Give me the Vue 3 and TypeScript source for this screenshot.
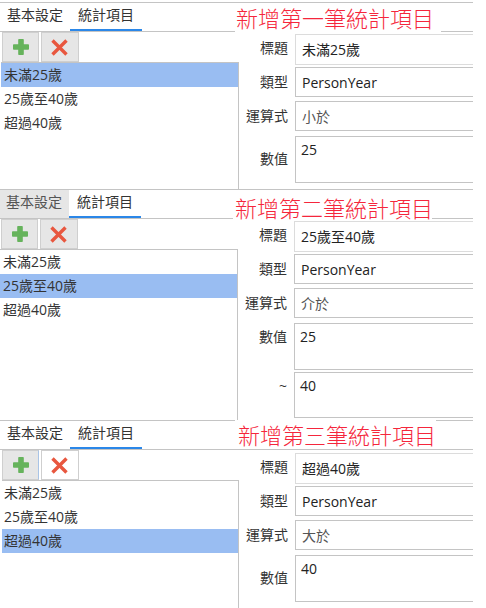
<script setup lang="ts">
interface Panel {
  id: string;
  heading: string;
  title: string;
  operator: string;
  values: string[];
  selected: number;
  firstTabMuted: boolean;
}

const items = ["未滿25歲", "25歲至40歲", "超過40歲"];

const panels: Panel[] = [
  { id: "one", heading: "新增第一筆統計項目", title: "未滿25歲", operator: "小於", values: ["25"], selected: 0, firstTabMuted: false },
  { id: "two", heading: "新增第二筆統計項目", title: "25歲至40歲", operator: "介於", values: ["25", "40"], selected: 1, firstTabMuted: true },
  { id: "three", heading: "新增第三筆統計項目", title: "超過40歲", operator: "大於", values: ["40"], selected: 2, firstTabMuted: false },
];
</script>

<template>
  <div class="page">
    <section v-for="panel in panels" :key="panel.id" class="panel" :class="panel.id">
      <div class="tabs">
        <div class="tab first" :class="{ muted: panel.firstTabMuted }">基本設定</div>
        <div class="tab active">統計項目</div>
      </div>
      <div class="heading">{{ panel.heading }}</div>
      <div class="body">
        <div class="left">
          <div class="toolbar">
            <button class="tool add" type="button">
              <svg width="16" height="16" viewBox="0 0 16 16">
                <path d="M6 0h4a.8.8 0 0 1 .8.8v4.4h4.4a.8.8 0 0 1 .8.8v4a.8.8 0 0 1-.8.8h-4.4v4.4a.8.8 0 0 1-.8.8H6a.8.8 0 0 1-.8-.8v-4.4H.8A.8.8 0 0 1 0 10V6a.8.8 0 0 1 .8-.8h4.4V.8A.8.8 0 0 1 6 0z" fill="#66b35c" />
              </svg>
            </button>
            <button class="tool remove" type="button">
              <svg width="17" height="17" viewBox="0 0 17 17">
                <path d="M1.5 1.5l14 14M15.5 1.5l-14 14" stroke="#e8573f" stroke-width="3.4" fill="none" />
              </svg>
            </button>
          </div>
          <ul class="list">
            <li v-for="(item, i) in items" :key="item" :class="{ selected: i === panel.selected }">{{ item }}</li>
          </ul>
        </div>
        <div class="form">
          <div class="row row-title">
            <label>標題</label>
            <div class="field">{{ panel.title }}</div>
          </div>
          <div class="row row-type">
            <label>類型</label>
            <div class="field">PersonYear</div>
          </div>
          <div class="row row-op">
            <label>運算式</label>
            <div class="field op">{{ panel.operator }}</div>
          </div>
          <div v-for="(value, i) in panel.values" :key="i" class="row row-value" :class="{ range: panel.values.length > 1, second: i === 1 }">
            <label>{{ i === 0 ? "數值" : "~" }}</label>
            <div class="field area">{{ value }}</div>
          </div>
        </div>
      </div>
    </section>
  </div>
</template>

<style>
html,
body {
  background: #fff;
  overflow: hidden;
}
</style>

<style scoped>
.page {
  width: 473px;
  height: 608px;
  padding-top: 2px;
  box-sizing: border-box;
  overflow: hidden;
  font-family: "Open Sans", "Noto Sans CJK TC", sans-serif;
  font-size: 14px;
  color: #333;
}
.panel {
  position: relative;
  display: flex;
  flex-direction: column;
  border-top: 1px solid #c4c4c4;
  box-sizing: border-box;
}
.panel.one {
  height: 187px;
}
.panel.two {
  height: 231px;
  margin-left: -1px;
}
.panel.three {
  height: 188px;
}
.tabs {
  display: flex;
  height: 28px;
  border-bottom: 1px solid #c4c4c4;
}
.tab {
  box-sizing: border-box;
  line-height: 23px;
  text-align: center;
  height: 28px;
  color: #333;
}
.tab.first {
  width: 70px;
}
.tab.active {
  width: 72px;
  border-bottom: 2px solid #2b87e8;
}
.tab.muted {
  background: #e6e6e6;
  color: #555;
}
.heading {
  position: absolute;
  background: #fff;
  font-size: 22px;
  font-weight: 300;
  color: #f5263c;
  white-space: nowrap;
  box-sizing: border-box;
  font-family: "Noto Sans CJK TC", sans-serif;
}
.one .heading {
  left: 235px;
  top: 0;
  width: 206px;
  height: 30px;
  line-height: 29px;
  padding-left: 1px;
}
.two .heading {
  left: 234px;
  top: 4px;
  width: 199px;
  height: 26px;
  line-height: 26px;
  padding-left: 2px;
}
.three .heading {
  left: 235px;
  top: -1px;
  width: 201px;
  height: 29px;
  line-height: 29px;
  padding-left: 3px;
}
.body {
  flex: 1;
  min-height: 0;
  display: grid;
  grid-template-columns: 239px 1fr;
}
.left {
  display: flex;
  flex-direction: column;
  min-height: 0;
}
.toolbar {
  display: flex;
  gap: 2px;
  height: 30px;
  padding-left: 2px;
}
.tool {
  width: 37px;
  height: 30px;
  padding: 0;
  display: flex;
  align-items: center;
  justify-content: center;
  background: #e6e6e6;
  border: 1px solid #cfcfcf;
  box-sizing: border-box;
}
.tool.remove {
  width: 38px;
  padding-right: 2px;
}
.three .tool.add {
  border-right-color: #a9c4e6;
}
.three .tool.remove {
  background: #fff;
}
.list {
  flex: 1;
  list-style: none;
  margin: 0 0 0 1px;
  padding: 0;
  border-top: 1px solid #c4c4c4;
  border-right: 1px solid #c4c4c4;
}
.three .list {
  margin-left: 2px;
}
.list li {
  height: 24px;
  line-height: 23px;
  padding-left: 3px;
}
.three .list li {
  padding-left: 2px;
}
.list li.selected {
  background: #99bdf2;
}
.form {
  display: flex;
  flex-direction: column;
  padding-top: 2px;
}
.three .form {
  padding-top: 3px;
}
.row {
  display: flex;
  align-items: center;
  gap: 6px;
}
.row label {
  width: 50px;
  flex: none;
  text-align: right;
  padding-right: 1px;
  padding-bottom: 2px;
  box-sizing: border-box;
}
.row-title {
  height: 31px;
}
.row-title label {
  padding-bottom: 5px;
}
.row-type {
  height: 30px;
  margin-top: 2px;
}
.row-op {
  height: 30px;
  margin-top: 4px;
}
.row-value {
  height: 47px;
  margin-top: 5px;
}
.row-value label {
  padding-bottom: 4px;
}
.row-value.second {
  height: 46px;
  margin-top: 2px;
}
.row-value.range {
  align-items: flex-start;
}
.row-value.range label {
  padding-top: 3px;
}
.row-value.second label {
  padding-top: 4px;
}
.field {
  flex: 1;
  height: 100%;
  display: flex;
  align-items: center;
  padding-left: 6px;
  border: 1px solid #c4c4c4;
  border-right: none;
  box-sizing: border-box;
  color: #222;
}
.row-title .field {
  border-color: #dcdcdc;
  padding-bottom: 2px;
}
.field.op {
  color: #555;
}
.field.area {
  align-items: flex-start;
  padding-left: 5px;
  padding-top: 3px;
}
</style>
